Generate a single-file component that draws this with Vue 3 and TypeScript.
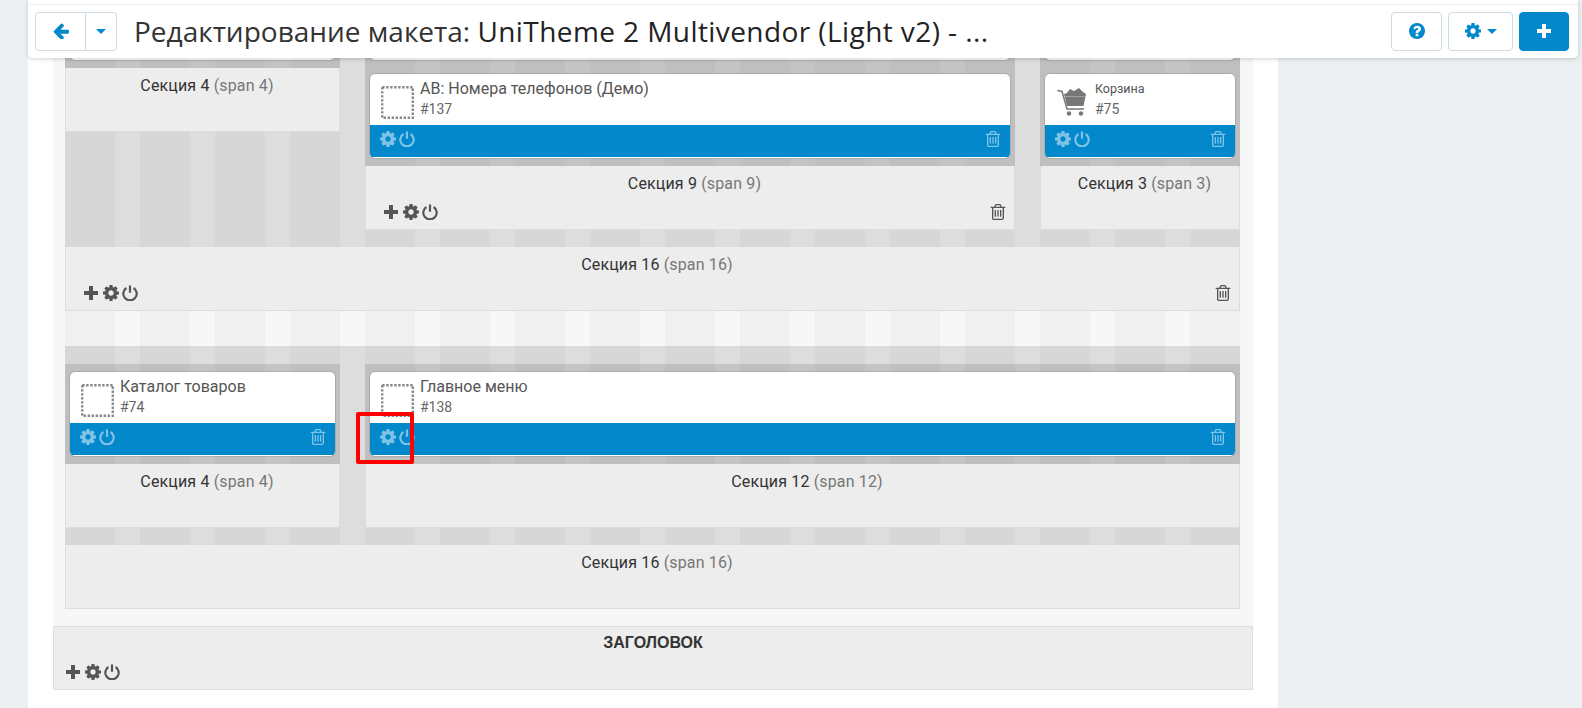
<template>
  <div class="screen">
    <header class="topbar">
      <div class="btn-group">
        <button type="button" class="btn btn-back">
          <svg class="ico" viewBox="128 128 1536 1536"><path :d="icons.arrow" /></svg>
        </button>
        <button type="button" class="btn btn-caret"><span class="caret"></span></button>
      </div>
      <h1 class="title">Редактирование макета: <span class="title-name">UniTheme 2 Multivendor (Light v2) - ...</span></h1>
      <div class="actions">
        <button type="button" class="btn btn-help">
          <svg class="ico" viewBox="128 128 1536 1536"><path :d="icons.help" /></svg>
        </button>
        <button type="button" class="btn btn-settings">
          <svg class="ico" viewBox="128 128 1536 1536"><path :d="icons.cog" /></svg>
          <span class="caret"></span>
        </button>
        <button type="button" class="btn btn-add">
          <svg class="ico" viewBox="0 0 16 16"><path :d="icons.plus" /></svg>
        </button>
      </div>
    </header>

    <div class="page">
      <div class="layout">
        <div class="grid">
          <section v-for="(row, r) in rows" :key="r" class="row16">
            <div class="cols">
              <div v-for="col in row.cols" :key="col.span" class="col" :style="{ width: spanWidth(col.span) + 'px' }">
                <div class="blocks">
                  <div v-for="b in col.blocks" :key="b.id" class="card">
                    <div v-if="b.name" class="card-body">
                      <svg v-if="b.cart" class="cart" viewBox="0 0 30 30">
                        <path d="M0.5 4.5 L5 5.5 L10 23 H27" fill="none" stroke="#777" stroke-width="1.5" />
                        <path d="M7 8 L10 7 L13 3 L17 5 L22 2 L26 6 L29 8 L26.5 20 H10 Z" fill="#777" />
                        <path d="M8 10.5 H28" stroke="#aaa" stroke-width="0.8" />
                        <circle cx="12" cy="27.5" r="2.2" fill="#777" />
                        <circle cx="24" cy="27.5" r="2.2" fill="#777" />
                      </svg>
                      <svg v-else class="placeholder" viewBox="0 0 33 33">
                        <rect x="1.2" y="1.2" width="30.6" height="30.6" fill="none" stroke="#888" stroke-width="2.4" stroke-dasharray="2.4 1.6" />
                      </svg>
                      <div class="card-text" :class="{ small: b.cart }">
                        <div class="card-name">{{ b.name }}</div>
                        <div class="card-id">#{{ b.id }}</div>
                      </div>
                    </div>
                    <div v-if="b.name" class="card-bar">
                      <svg class="ico" viewBox="128 128 1536 1536"><path :d="icons.cog" /></svg>
                      <svg class="ico power" viewBox="0 0 16 16">
                        <path :d="powerPath" />
                      </svg>
                      <svg class="ico trash" viewBox="128 128 1536 1536"><path :d="icons.trash" /></svg>
                    </div>
                  </div>
                </div>
                <div class="info">
                  <div class="info-title">Секция {{ col.span }} <span class="muted">(span {{ col.span }})</span></div>
                  <div v-if="col.tools" class="tools">
                    <svg class="ico" viewBox="0 0 16 16"><path :d="icons.plus" /></svg>
                    <svg class="ico" viewBox="128 128 1536 1536"><path :d="icons.cog" /></svg>
                    <svg class="ico power" viewBox="0 0 16 16">
                      <path :d="powerPath" />
                    </svg>
                    <svg class="ico trash" viewBox="128 128 1536 1536"><path :d="icons.trash" /></svg>
                  </div>
                </div>
              </div>
            </div>
            <div class="info info-row">
              <div class="info-title">Секция 16 <span class="muted">(span 16)</span></div>
              <div v-if="row.tools" class="tools">
                <svg class="ico" viewBox="0 0 16 16"><path :d="icons.plus" /></svg>
                <svg class="ico" viewBox="128 128 1536 1536"><path :d="icons.cog" /></svg>
                <svg class="ico power" viewBox="0 0 16 16">
                  <path :d="powerPath" />
                </svg>
                <svg class="ico trash" viewBox="128 128 1536 1536"><path :d="icons.trash" /></svg>
              </div>
            </div>
          </section>
        </div>

        <div class="info container-box">
          <div class="info-title strong">ЗАГОЛОВОК</div>
          <div class="tools">
            <svg class="ico" viewBox="0 0 16 16"><path :d="icons.plus" /></svg>
            <svg class="ico" viewBox="128 128 1536 1536"><path :d="icons.cog" /></svg>
            <svg class="ico power" viewBox="0 0 16 16">
              <path :d="powerPath" />
            </svg>
          </div>
        </div>
      </div>
    </div>

    <!-- пометка на скриншоте -->
    <div class="marker"></div>
  </div>
</template>

<script setup lang="ts">
interface Block {
  id: number
  name: string
  cart?: boolean
}
interface Col {
  span: number
  tools?: boolean
  blocks: Block[]
}
interface Row {
  tools?: boolean
  cols: Col[]
}

const powerPath = 'M4.4 3a6.7 6.7 0 1 0 7.2 0M8 0.6v7.2'

const icons = {
  plus: 'M6 1h4v5h5v4h-5v5H6v-5H1V6h5z',
  arrow:
    'M1664 896v128q0 53-32.5 90.5t-84.5 37.5h-704l293 294q38 36 38 90t-38 90l-75 76q-37 37-90 37-52 0-91-37l-651-652q-37-37-37-90 0-52 37-91l651-650q38-38 91-38 52 0 90 38l75 74q38 38 38 91t-38 91l-293 293h704q52 0 84.5 37.5t32.5 90.5z',
  help:
    'M1024 1376v-192q0-14-9-23t-23-9h-192q-14 0-23 9t-9 23v192q0 14 9 23t23 9h192q14 0 23-9t9-23zm256-672q0-88-55.5-163t-138.5-116-170-41q-243 0-371 213-15 24 8 42l132 100q7 6 19 6 16 0 25-12 53-68 86-92 34-24 86-24 48 0 85.5 26t37.5 59q0 38-20 61t-68 45q-63 28-115.5 86.5t-52.5 125.5v36q0 14 9 23t23 9h192q14 0 23-9t9-23q0-19 21.5-49.5t54.5-49.5q32-18 49-28.5t46-35 44.5-48 28-60.5 12.5-81zm384 192q0 209-103 385.5t-279.5 279.5-385.5 103-385.5-103-279.5-279.5-103-385.5 103-385.5 279.5-279.5 385.5-103 385.5 103 279.5 279.5 103 385.5z',
  cog:
    'M1152 896q0-106-75-181t-181-75-181 75-75 181 75 181 181 75 181-75 75-181zm512-109v222q0 12-8 23t-20 13l-185 28q-19 54-39 91 35 50 107 138 10 12 10 25t-9 23q-27 37-99 108t-94 71q-12 0-26-9l-138-108q-44 23-91 38-16 136-29 186-7 28-36 28h-222q-14 0-24.5-8.5t-11.5-21.5l-28-184q-49-16-90-37l-141 107q-10 9-25 9-14 0-25-11-126-114-165-168-7-10-7-23 0-12 8-23 15-21 51-66.5t54-70.5q-27-50-41-99l-183-27q-13-2-21-12.5t-8-23.5v-222q0-12 8-23t19-13l186-28q14-46 39-92-40-57-107-138-10-12-10-24 0-10 9-23 26-36 98.5-107.5t94.5-71.5q13 0 26 10l138 107q44-23 91-38 16-136 29-186 7-28 36-28h222q14 0 24.5 8.5t11.5 21.5l28 184q49 16 90 37l142-107q9-9 24-9 13 0 25 10 129 119 165 170 7 8 7 22 0 12-8 23-15 21-51 66.5t-54 70.5q26 50 41 98l183 28q13 2 21 12.5t8 23.5z',
  trash:
    'M704 736v576q0 14-9 23t-23 9h-64q-14 0-23-9t-9-23v-576q0-14 9-23t23-9h64q14 0 23 9t9 23zm256 0v576q0 14-9 23t-23 9h-64q-14 0-23-9t-9-23v-576q0-14 9-23t23-9h64q14 0 23 9t9 23zm256 0v576q0 14-9 23t-23 9h-64q-14 0-23-9t-9-23v-576q0-14 9-23t23-9h64q14 0 23 9t9 23zm128 724v-948h-896v948q0 22 7 40.5t14.5 27 10.5 8.5h832q3 0 10.5-8.5t14.5-27 7-40.5zm-672-1076h448l-48-117q-7-9-17-11h-317q-10 2-17 11zm928 32v64q0 14-9 23t-23 9h-96v948q0 83-47 143.5t-113 60.5h-832q-66 0-113-58.5t-47-141.5v-952h-96q-14 0-23-9t-9-23v-64q0-14 9-23t23-9h309l70-167q15-37 54-63t79-26h320q40 0 79 26t54 63l70 167h309q14 0 23 9t9 23z',
}

const rows: Row[] = [
  {
    tools: true,
    cols: [
      { span: 4, blocks: [{ id: 1, name: '' }] },
      {
        span: 9,
        tools: true,
        blocks: [
          { id: 2, name: '' },
          { id: 137, name: 'АВ: Номера телефонов (Демо)' },
        ],
      },
      {
        span: 3,
        blocks: [
          { id: 3, name: '' },
          { id: 75, name: 'Корзина', cart: true },
        ],
      },
    ],
  },
  {
    cols: [
      { span: 4, blocks: [{ id: 74, name: 'Каталог товаров' }] },
      { span: 12, blocks: [{ id: 138, name: 'Главное меню' }] },
    ],
  },
]

// 50px колонка + 25px отступ
function spanWidth(span: number): number {
  return span * 50 + (span - 1) * 25
}
</script>

<style scoped>
.screen {
  position: relative;
  height: 708px;
  font-family: Roboto, "Liberation Sans", sans-serif;
  font-size: 16px;
  line-height: 20px;
  color: #333;
}
.page {
  width: 1250px;
  height: 708px;
  margin-left: 28px;
  padding-left: 25px;
  box-sizing: border-box;
  background: #fff;
  overflow: hidden;
}
.topbar {
  position: absolute;
  z-index: 5;
  left: 28px;
  top: 0;
  width: 1550px;
  height: 58px;
  box-sizing: border-box;
  padding: 11px 9px 7px 7px;
  display: flex;
  align-items: center;
  background: linear-gradient(#fff 4px, #eee 4px, #eee 5px, #fff 5px);
  border-radius: 0 0 5px 5px;
  box-shadow: 0 1px 4px rgba(0, 0, 0, 0.18);
}
.btn-group {
  display: flex;
}
.btn {
  height: 39px;
  padding: 0;
  display: flex;
  align-items: center;
  justify-content: center;
  gap: 6px;
  background: #fff;
  border: 1px solid #cfdbe4;
  border-radius: 4px;
  color: #0388cc;
}
.btn-back {
  width: 51px;
  border-radius: 4px 0 0 4px;
}
.btn-caret {
  width: 31px;
  border-left: 0;
  border-radius: 0 4px 4px 0;
}
.caret {
  width: 0;
  height: 0;
  border-top: 5px solid #0388cc;
  border-left: 5px solid transparent;
  border-right: 5px solid transparent;
}
.title {
  flex: 1;
  margin: 0 0 0 17px;
  font-family: "Open Sans", sans-serif;
  font-size: 28px;
  font-weight: 400;
  line-height: 39px;
  color: #333;
  white-space: nowrap;
}
.title-name {
  letter-spacing: 0.42px;
  color: #222;
}
.actions {
  display: flex;
  gap: 6px;
}
.btn-help {
  width: 51px;
}
.btn-settings {
  width: 65px;
}
.btn-add {
  width: 50px;
  background: #0388cc;
  border-color: #0388cc;
  color: #fff;
}
.ico {
  display: block;
  width: 16px;
  height: 16px;
  fill: currentColor;
  flex-shrink: 0;
}
.power {
  fill: none;
  stroke: currentColor;
  stroke-width: 2.2;
}
.trash {
  margin-left: auto;
}

.layout {
  width: 1200px;
  margin-top: -50px;
  background: #f7f7f7;
}
.grid {
  padding: 0 13px 17px 12px;
  display: flex;
  flex-direction: column;
  gap: 35px;
  background-image: repeating-linear-gradient(
    to right,
    #f0f0f0 0,
    #f0f0f0 50px,
    #f7f7f7 50px,
    #f7f7f7 75px
  );
  background-origin: content-box;
  background-clip: content-box;
}
.cols {
  display: flex;
  gap: 25px;
  padding: 18px 0 17px;
  background: rgba(0, 0, 0, 0.1);
}
.col {
  display: flex;
  flex-direction: column;
}
.blocks {
  display: flex;
  flex-direction: column;
  gap: 14px;
  padding: 8px 5px;
  background: rgba(0, 0, 0, 0.11);
}
.card {
  height: 84px;
  box-sizing: border-box;
  padding-bottom: 1px;
  display: flex;
  flex-direction: column;
  background: #fff;
  border-radius: 5px;
  overflow: hidden;
  box-shadow: 0 0 0 1px rgba(0, 0, 0, 0.1);
}
.card-body {
  flex: 1;
  display: flex;
  gap: 6px;
  padding: 5px 11px;
}
.placeholder {
  width: 33px;
  height: 33px;
  margin-top: 7px;
  flex-shrink: 0;
}
.cart {
  width: 30px;
  height: 30px;
  margin: 7px 2px 0 1px;
  flex-shrink: 0;
}
.card-text {
  color: #555;
}
.card-name {
  font-size: 16px;
}
.card-text.small .card-name {
  font-size: 12.5px;
}
.card-id {
  font-size: 14px;
  color: #666;
}
.card-bar {
  height: 32px;
  box-sizing: border-box;
  padding: 0 9px 4px 10px;
  display: flex;
  align-items: center;
  gap: 3px;
  background: #0388cc;
  color: #7fc3e6;
}

.info {
  flex: 1;
  min-height: 64px;
  box-sizing: border-box;
  display: flex;
  flex-direction: column;
  padding: 8px 8px 8px 17px;
  background: #ededed;
  border: 1px solid #ddd;
  border-top: 0;
}
.info-title {
  text-align: center;
  flex: 1;
  letter-spacing: 0.15px;
}
.muted {
  color: #777;
}
.strong {
  font-family: "Liberation Sans", sans-serif;
  font-weight: 700;
  letter-spacing: 0;
}
.tools {
  height: 18px;
  display: flex;
  align-items: center;
  gap: 3.5px;
  color: #555;
}
.col > .info {
  flex: 0 0 64px;
}
.container-box {
  padding: 6px 11px 8px;
  border-top: 1px solid #ddd;
}
.marker {
  position: absolute;
  left: 356px;
  top: 412px;
  width: 58px;
  height: 52px;
  box-sizing: border-box;
  border: 4px solid #f00;
  border-radius: 2px;
}
</style>

<style>
html,
body {
  margin: 0;
  height: 708px;
  overflow: hidden;
  background: #ecf0f3;
}
</style>
